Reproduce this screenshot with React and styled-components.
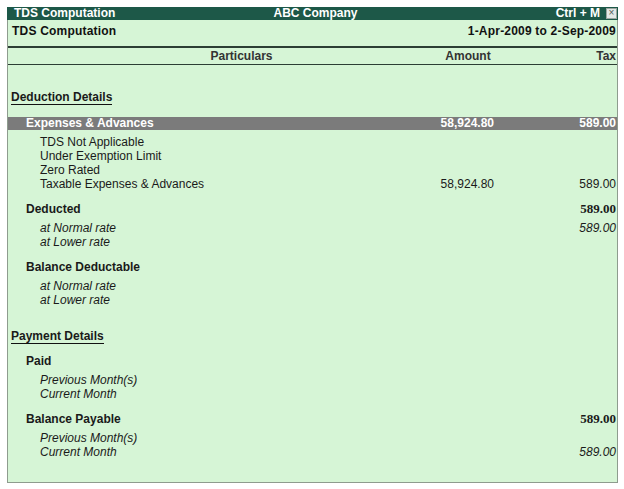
import styled, { createGlobalStyle } from "styled-components";

const GlobalStyle = createGlobalStyle`
  html, body {
    margin: 0;
    padding: 0;
    background: #ffffff;
  }
  body {
    padding: 7px 0 0 7px;
    font-family: "Liberation Sans", Arial, sans-serif;
  }
  * {
    box-sizing: border-box;
  }
`;

const Window = styled.div`
  width: 611px;
  height: 476px;
  background: #d6f5d6;
  border: 1px solid #8e9c8e;
  border-top: none;
  display: flex;
  flex-direction: column;
`;

const TitleBar = styled.div`
  height: 13px;
  margin: 0 -1px;
  background: #1d5848;
  color: #ffffff;
  font-size: 12px;
  font-weight: bold;
  line-height: 13px;
  display: grid;
  grid-template-columns: 1fr auto 1fr;
  padding: 0 1px 0 7px;
`;

const TitleRight = styled.div`
  display: flex;
  justify-content: flex-end;
  align-items: center;
  gap: 6px;
`;

const CloseBox = styled.span`
  width: 11px;
  height: 11px;
  background: #e4e8e6;
  border: 1px solid #9aa5a0;
  color: #55605a;
  font-size: 10px;
  line-height: 8px;
  text-align: center;
  font-weight: normal;
`;

const ReportHeader = styled.div`
  height: 28px;
  display: flex;
  justify-content: space-between;
  align-items: flex-start;
  padding: 4px 1px 0 4px;
  font-size: 12px;
  font-weight: bold;
  color: #111;
  line-height: 14px;
  border-bottom: 2px solid #2c3e34;
  letter-spacing: 0.2px;
`;

const Columns = styled.div`
  display: grid;
  grid-template-columns: 423px 72px 1fr;
`;

const ColumnHeader = styled(Columns)`
  height: 17px;
  line-height: 16px;
  font-size: 12px;
  font-weight: bold;
  color: #333;
  border-bottom: 1px solid #2c3e34;
`;

const HeadCell = styled.div`
  text-align: ${(p) => p.$align || "right"};
  padding-left: ${(p) => p.$pl || 0}px;
  padding-right: ${(p) => p.$pr || 0}px;
`;

const Body = styled.div`
  padding-top: 25px;
  font-size: 12px;
  color: #1a1a1a;
`;

const SectionTitle = styled.div`
  margin-top: ${(p) => p.$mt || 0}px;
  padding-left: 3px;
  height: 14px;
  line-height: 14px;
  span {
    font-weight: bold;
    display: inline-block;
    border-bottom: 1px solid #111;
    line-height: 13px;
  }
`;

const Row = styled(Columns)`
  height: ${(p) => p.$h || 14}px;
  line-height: ${(p) => p.$h || 14}px;
  margin-top: ${(p) => p.$mt || 0}px;
  background: ${(p) => (p.$hl ? "#7b7b7b" : "transparent")};
  color: ${(p) => (p.$hl ? "#ffffff" : "#1a1a1a")};
  font-weight: ${(p) => (p.$bold ? "bold" : "normal")};
  font-style: ${(p) => (p.$italic ? "italic" : "normal")};
`;

const Label = styled.div`
  padding-left: ${(p) => p.$indent}px;
  white-space: nowrap;
`;

const Num = styled.div`
  text-align: right;
  padding-right: ${(p) => p.$pr || 0}px;
  font-family: ${(p) =>
    p.$serif ? '"Liberation Serif", "Times New Roman", serif' : "inherit"};
  font-size: ${(p) => (p.$serif ? 13 : 12)}px;
`;

function Line({ label, amount, tax, indent = 32, bold, italic, hl, mt, h, serifTax }) {
  return (
    <Row $bold={bold} $italic={italic} $hl={hl} $mt={mt} $h={h}>
      <Label $indent={indent}>{label}</Label>
      <Num $pr={9}>{amount}</Num>
      <Num $pr={1} $serif={serifTax}>{tax}</Num>
    </Row>
  );
}

function Group({ title, tax, items, mt = 11 }) {
  return (
    <>
      <Line label={title} indent={18} bold mt={mt} tax={tax} serifTax />
      {items.map((it, i) => (
        <Line
          key={title + it.label}
          label={it.label}
          tax={it.tax}
          indent={32}
          italic
          mt={i === 0 ? 5 : 0}
        />
      ))}
    </>
  );
}

export default function App() {
  return (
    <>
      <GlobalStyle />
      <Window>
        <TitleBar>
          <span>TDS Computation</span>
          <span>ABC Company</span>
          <TitleRight>
            <span>Ctrl + M</span>
            <CloseBox>×</CloseBox>
          </TitleRight>
        </TitleBar>
        <ReportHeader>
          <span>TDS Computation</span>
          <span>1-Apr-2009 to 2-Sep-2009</span>
        </ReportHeader>
        <ColumnHeader>
          <HeadCell $align="center" $pl={44}>Particulars</HeadCell>
          <HeadCell $align="center" $pl={2}>Amount</HeadCell>
          <HeadCell $pr={1}>Tax</HeadCell>
        </ColumnHeader>
        <Body>
          <SectionTitle>
            <span>Deduction Details</span>
          </SectionTitle>
          <Line
            label="Expenses & Advances"
            indent={18}
            bold
            hl
            mt={13}
            h={13}
            amount="58,924.80"
            tax="589.00"
          />
          <Line label="TDS Not Applicable" mt={5} />
          <Line label="Under Exemption Limit" />
          <Line label="Zero Rated" />
          <Line label="Taxable Expenses & Advances" amount="58,924.80" tax="589.00" />
          <Group
            title="Deducted"
            tax="589.00"
            items={[{ label: "at Normal rate", tax: "589.00" }, { label: "at Lower rate" }]}
          />
          <Group
            title="Balance Deductable"
            items={[{ label: "at Normal rate" }, { label: "at Lower rate" }]}
          />
          <SectionTitle $mt={22}>
            <span>Payment Details</span>
          </SectionTitle>
          <Group
            title="Paid"
            items={[{ label: "Previous Month(s)" }, { label: "Current Month" }]}
          />
          <Group
            title="Balance Payable"
            tax="589.00"
            items={[{ label: "Previous Month(s)" }, { label: "Current Month", tax: "589.00" }]}
          />
        </Body>
      </Window>
    </>
  );
}
